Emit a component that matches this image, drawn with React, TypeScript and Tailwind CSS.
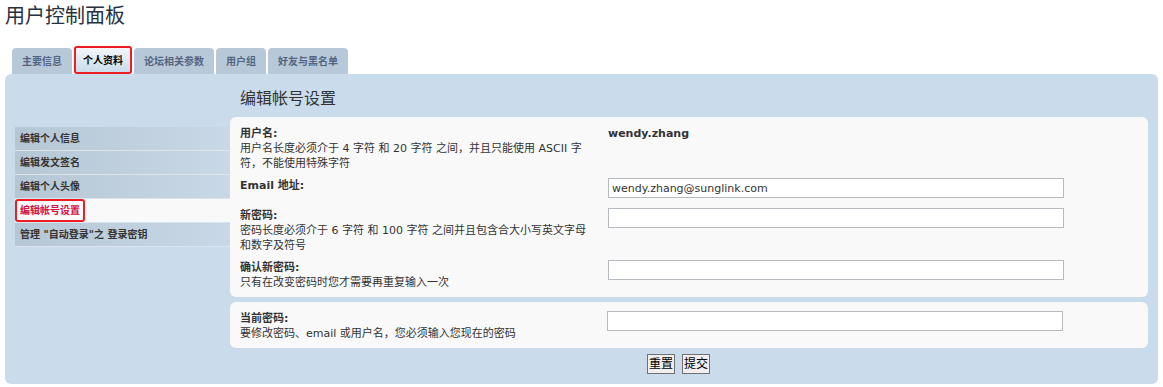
import React from "react";

const FONT = "font-['DejaVu_Sans','Noto_Sans_CJK_SC',sans-serif]";

const tabs = ["主要信息", "个人资料", "论坛相关参数", "用户组", "好友与黑名单"];

const menu = ["编辑个人信息", "编辑发文签名", "编辑个人头像", "编辑帐号设置", "管理 \"自动登录\"之 登录密钥"];

const Field: React.FC<{ className?: string }> = ({ className = "" }) => (
  <input
    type="text"
    className={`h-[20px] w-[456px] border border-[#b4bac0] bg-white px-[3px] text-[11px] text-[#333] outline-none ${className}`}
  />
);

const App: React.FC = () => {
  return (
    <div className={`${FONT} h-[387px] w-[1163px] overflow-hidden bg-white text-[#333]`}>
      {/* ---------------- TITLE ---------------- */}
      <h1 className="pl-[5px] text-[20px] leading-[32px] font-normal text-[#28313f]">用户控制面板</h1>

      {/* ---------------- TABS ---------------- */}
      <div className="mt-[16px] flex gap-[2px] pl-[12px]">
        {tabs.map((t, i) =>
          i === 1 ? (
            <div
              key={t}
              className="flex h-[28px] -mt-[2px] items-center rounded-[3px] border-2 border-[#ee1c25] bg-gradient-to-b from-[#f2f6f9] to-[#cadceb] px-[7px] text-[10px] font-bold text-black"
            >
              {t}
            </div>
          ) : (
            <div
              key={t}
              className="flex h-[26px] items-center rounded-t-[4px] bg-[#b7c9d8] px-[10px] text-[10px] font-bold text-[#536482]"
            >
              {t}
            </div>
          )
        )}
      </div>

      {/* ---------------- PANEL ---------------- */}
      <div className="mx-[5px] h-[310px] rounded-[6px] bg-[#cadceb] px-[10px]">
        <h2 className="pl-[225px] pt-[15px] pb-[8px] text-[16px] leading-[20px] font-normal text-[#333]">
          编辑帐号设置
        </h2>

        <div className="flex">
          {/* -------- LEFT MENU -------- */}
          <ul className="mt-[10px] w-[215px]">
            {menu.map((m, i) =>
              i === 3 ? (
                <li key={m} className="flex h-[24px] items-stretch border-b border-[#dbe4ed] bg-[#f9f9f9]">
                  <span className="flex items-center rounded-[3px] border-2 border-[#ee1c25] px-[3px] text-[10px] font-bold text-[#d31141]">
                    {m}
                  </span>
                </li>
              ) : (
                <li
                  key={m}
                  className="flex h-[24px] items-center border-b border-[#dbe4ed] bg-gradient-to-r from-[#b5c6d4] to-[#c8d8e6] pl-[5px] text-[10px] font-bold whitespace-pre text-[#333]"
                >
                  {m}
                </li>
              )
            )}
          </ul>

          {/* -------- CONTENT -------- */}
          <div className="flex-1">
            <div className="rounded-[6px] bg-[#f9f9f9] px-[10px] pt-[9px] pb-[7px] text-[11px] leading-[15px]">
              <div className="flex">
                <div className="w-[368px] whitespace-nowrap">
                  <div className="font-bold">用户名:</div>
                  <div>
                    用户名长度必须介于 4 字符 和 20 字符 之间，并且只能使用 ASCII 字
                    <br />
                    符，不能使用特殊字符
                  </div>
                </div>
                <div className="text-[11px] font-bold text-[#333]">wendy.zhang</div>
              </div>

              <div className="mt-[7px] flex">
                <div className="w-[368px] font-bold">Email 地址:</div>
                <input
                  type="text"
                  defaultValue="wendy.zhang@sunglink.com"
                  className="h-[20px] w-[456px] border border-[#b4bac0] bg-white px-[3px] text-[11px] text-[#333] outline-none"
                />
              </div>

              <div className="mt-[10px] flex">
                <div className="w-[368px] whitespace-nowrap">
                  <div className="font-bold">新密码:</div>
                  <div>
                    密码长度必须介于 6 字符 和 100 字符 之间并且包含合大小写英文字母
                    <br />
                    和数字及符号
                  </div>
                </div>
                <Field />
              </div>

              <div className="mt-[7px] flex">
                <div className="w-[368px]">
                  <div className="font-bold">确认新密码:</div>
                  <div>只有在改变密码时您才需要再重复输入一次</div>
                </div>
                <Field />
              </div>
            </div>

            <div className="mt-[5px] flex rounded-[6px] bg-[#f9f9f9] px-[10px] pt-[9px] pb-[7px] text-[11px] leading-[15px]">
              <div className="w-[367px]">
                <div className="font-bold">当前密码:</div>
                <div>要修改密码、email 或用户名，您必须输入您现在的密码</div>
              </div>
              <Field />
            </div>

            <div className="mt-[6px] flex gap-[7px] pl-[417px]">
              <button className="h-[20px] border border-[#707070] bg-[#efefef] px-[1px] text-[12px] leading-none text-black">
                重置
              </button>
              <button className="h-[20px] border border-[#707070] bg-[#efefef] px-[1px] text-[12px] leading-none text-black">
                提交
              </button>
            </div>
          </div>
        </div>
      </div>
    </div>
  );
};

export default App;
